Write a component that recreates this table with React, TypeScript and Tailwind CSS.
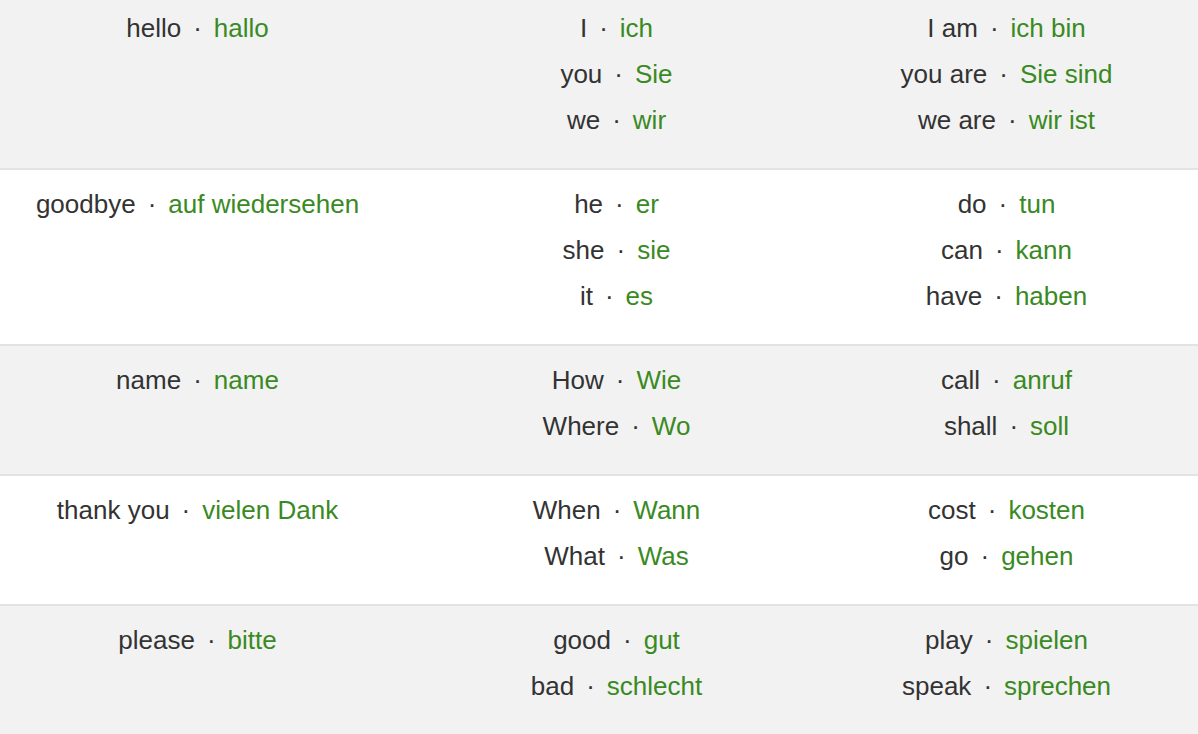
import React from 'react';

type Pair = [string, string];

const rows: Pair[][][] = [
  [
    [['hello', 'hallo']],
    [['I', 'ich'], ['you', 'Sie'], ['we', 'wir']],
    [['I am', 'ich bin'], ['you are', 'Sie sind'], ['we are', 'wir ist']],
  ],
  [
    [['goodbye', 'auf wiedersehen']],
    [['he', 'er'], ['she', 'sie'], ['it', 'es']],
    [['do', 'tun'], ['can', 'kann'], ['have', 'haben']],
  ],
  [
    [['name', 'name']],
    [['How', 'Wie'], ['Where', 'Wo']],
    [['call', 'anruf'], ['shall', 'soll']],
  ],
  [
    [['thank you', 'vielen Dank']],
    [['When', 'Wann'], ['What', 'Was']],
    [['cost', 'kosten'], ['go', 'gehen']],
  ],
  [
    [['please', 'bitte']],
    [['good', 'gut'], ['bad', 'schlecht']],
    [['play', 'spielen'], ['speak', 'sprechen']],
  ],
];

function Word({ pair }: { pair: Pair }) {
  return (
    <li className="whitespace-nowrap">
      <span className="text-[#333333]">{pair[0]}</span>
      <span className="mx-[12px] text-[#333333]">·</span>
      <span className="text-[#3a8a23]">{pair[1]}</span>
    </li>
  );
}

export default function App() {
  return (
    <div className="min-h-screen w-full bg-white font-['Liberation_Sans',Arial,Helvetica,sans-serif] text-[26px] leading-[46px]">
      {rows.map((row, i) => (
        <div
          key={i}
          className={
            'grid grid-cols-[395px_443px_337px] pb-[25px] ' +
            (i === 0 ? 'pt-[5px] ' : 'pt-[11px] border-t-2 border-[#e1e3e5] ') +
            (i % 2 === 0 ? 'bg-[#f2f2f2]' : 'bg-white')
          }
        >
          {row.map((cell, j) => (
            <ul key={j} className="flex flex-col items-center">
              {cell.map((pair, k) => (
                <Word key={k} pair={pair} />
              ))}
            </ul>
          ))}
        </div>
      ))}
    </div>
  );
}
